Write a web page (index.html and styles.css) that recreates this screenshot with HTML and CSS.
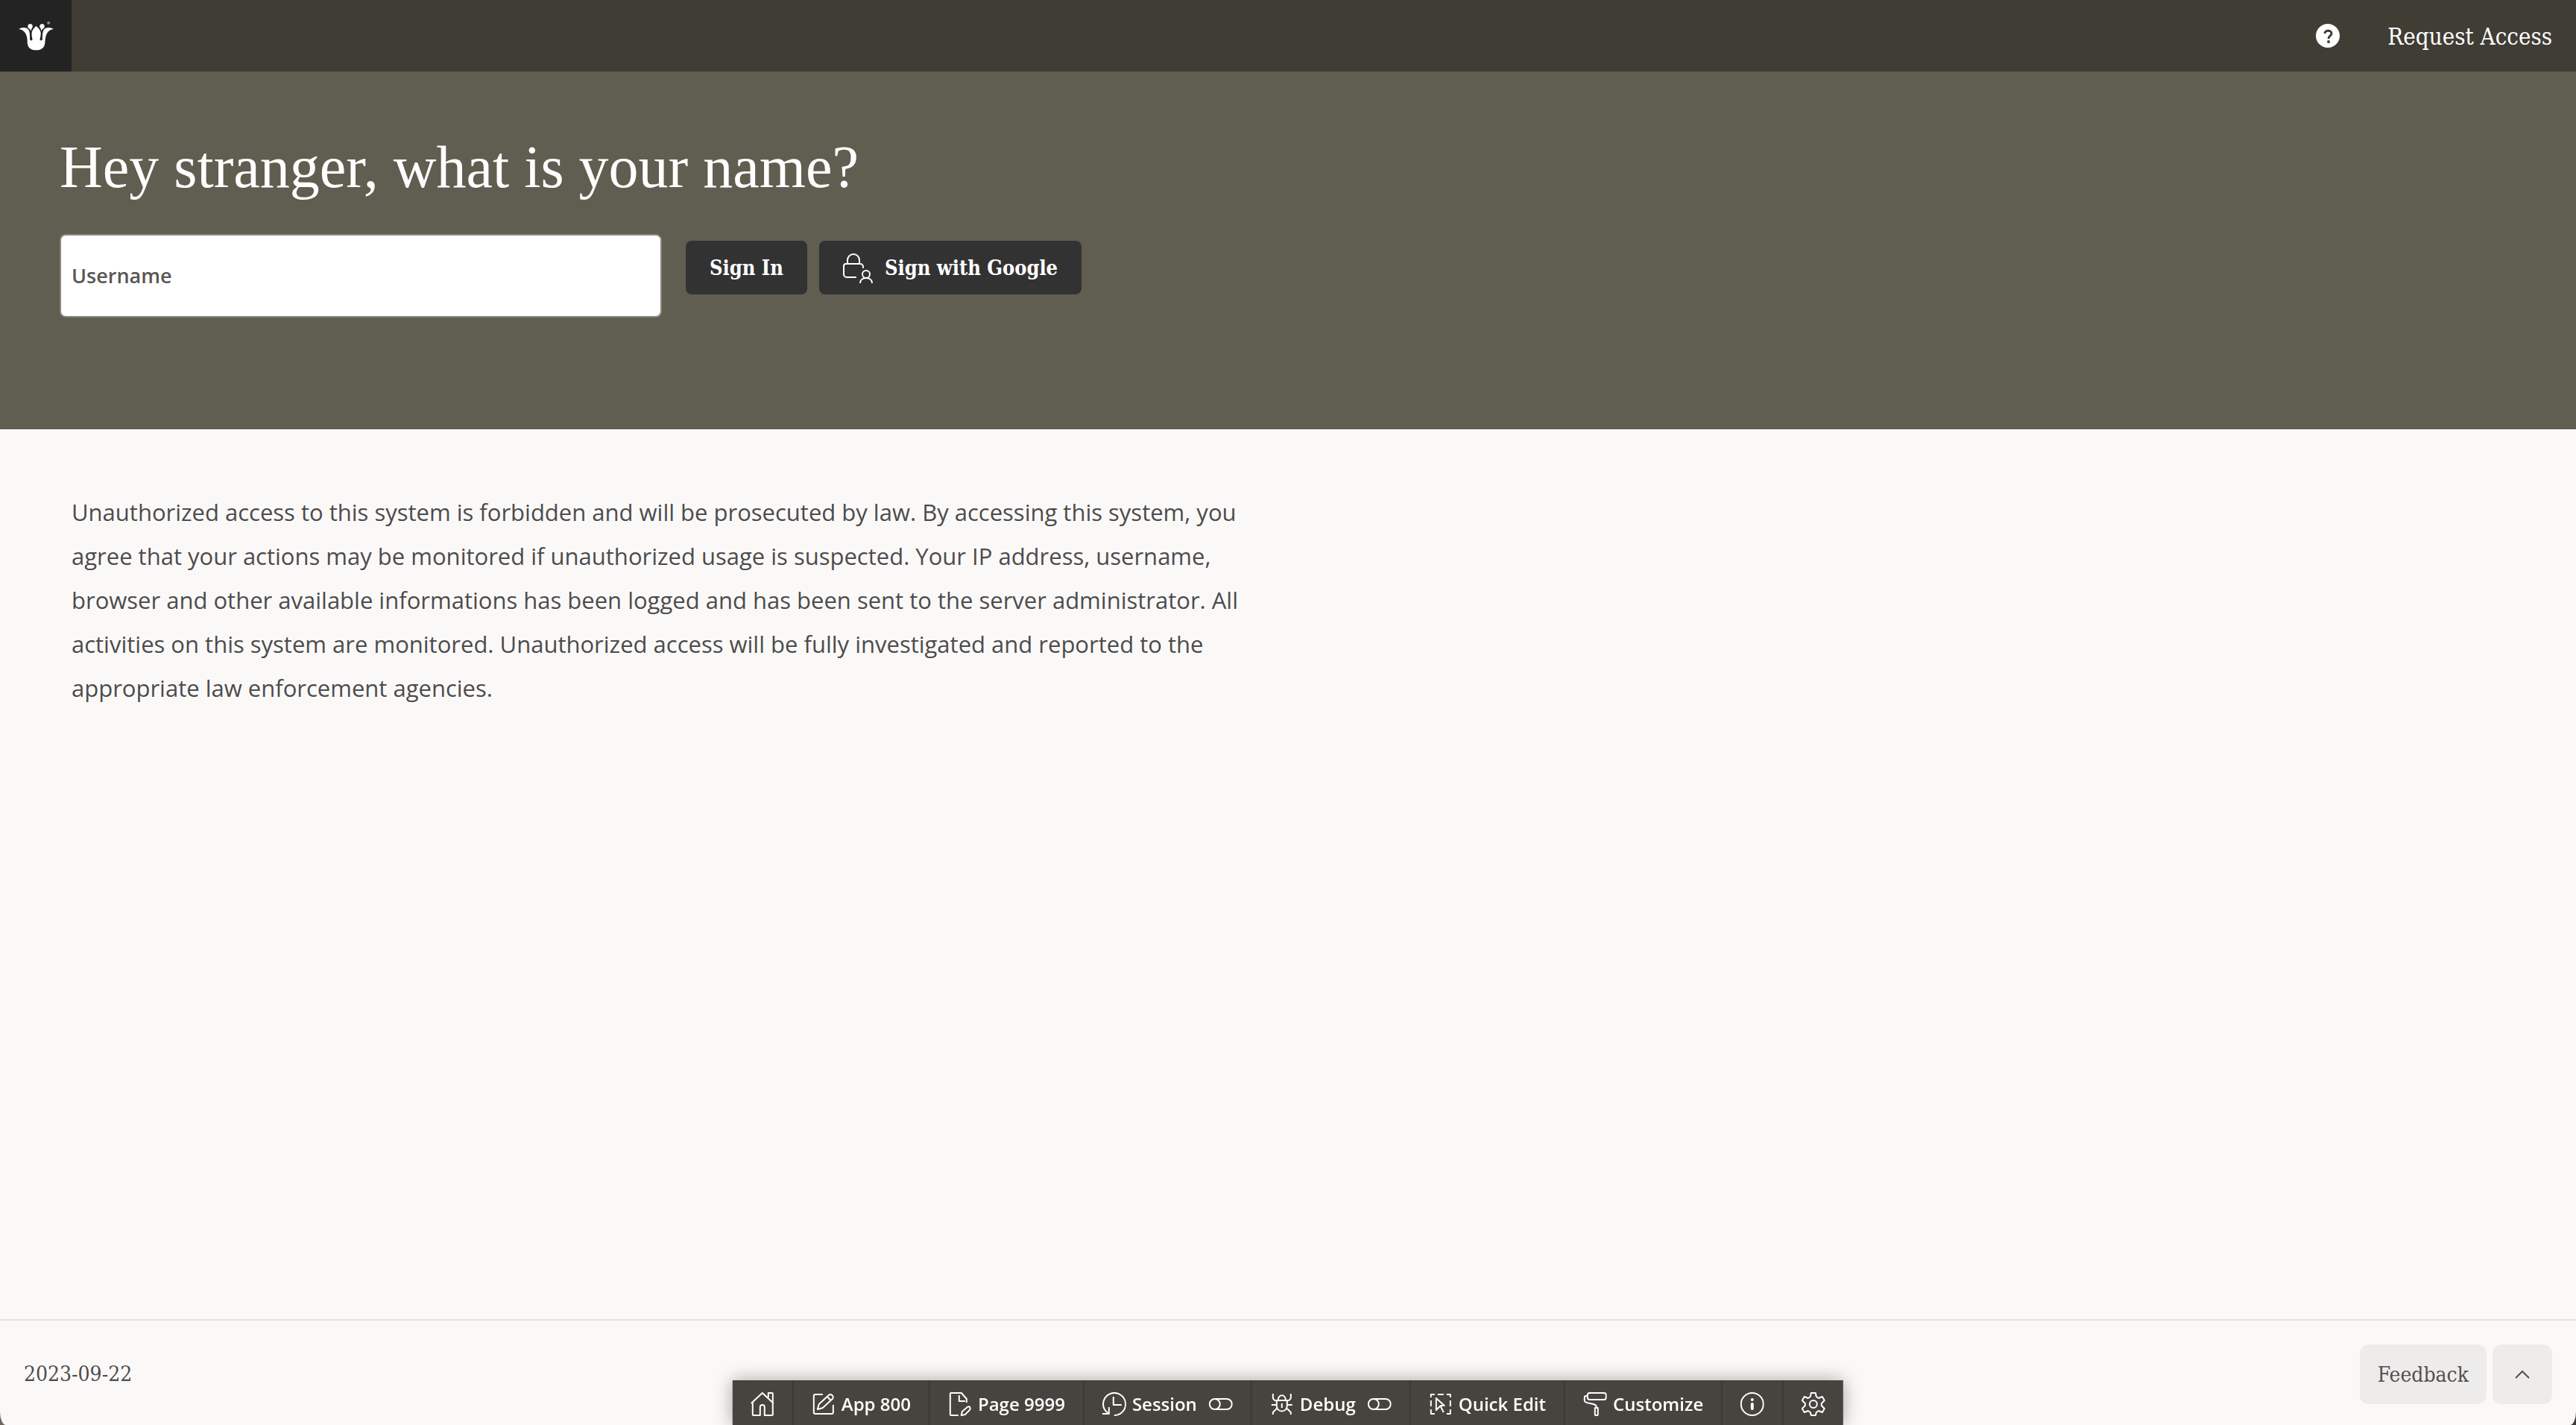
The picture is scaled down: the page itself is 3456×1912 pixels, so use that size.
FILE: index.html
```html
<!DOCTYPE html>
<html lang="en">
<head>
<meta charset="utf-8">
<meta name="viewport" content="width=device-width, initial-scale=1">
<title>Sign In</title>
<link rel="stylesheet" href="styles.css">
</head>
<body>
<div class="page">
  <header class="topbar">
    <a class="logo" href="#" aria-label="Home">
      <svg viewBox="74 80 140 120" aria-hidden="true">
        <path d="M74 113C84 107 97 105 107 110C118 116 119 128 119 156C119 160 129 160 129 156C128 145 124 134 127 124C131 112 138 106 144 101C150 106 158 112 162 124C165 134 160 145 159 156C159 160 168 160 169 156C169 128 171 116 181 110C191 105 204 107 214 113C198 115 186 126 182 146C180 156 180 164 179 172C176 190 162 198 144 198C126 198 112 190 109 172C108 164 109 156 107 146C103 126 90 115 74 113Z"/>
        <path d="M120 92a10 10 0 0 1 8 16c-3 4-4 7-4 14c-2-7-6-9-11-13a10 10 0 0 1 7-17ZM168 92a10 10 0 0 0-8 16c3 4 4 7 4 14c2-7 6-9 11-13a10 10 0 0 0-7-17Z"/>
        <circle class="logo-mark" cx="194" cy="88" r="6"/>
      </svg>
    </a>
    <nav class="topnav">
      <a class="help" href="#" aria-label="Help">
        <svg viewBox="0 0 32 32" aria-hidden="true">
          <circle cx="16" cy="16" r="16"/>
          <path d="M12 13c0-5 9-5 9 0c0 3-4 3-4 7"/>
          <circle class="help-dot" cx="17" cy="24" r="2"/>
        </svg>
      </a>
      <a class="request" href="#">Request Access</a>
    </nav>
  </header>

  <section class="hero">
    <h1 class="title">Hey stranger, what is your name?</h1>
    <form class="login">
      <div class="field">
        <input class="field-input" id="username" type="text">
        <label class="field-label" for="username">Username</label>
      </div>
      <div class="actions">
        <button class="btn" type="submit">Sign In</button>
        <button class="btn" type="button">
          <svg class="icon-lock" viewBox="0 0 40 40" aria-hidden="true">
            <path d="M6 14V9a8 8 0 0 1 16 0v5M27 19v-1a4 4 0 0 0-4-4H4a3 3 0 0 0-3 3v11a4 4 0 0 0 4 4h12"/>
            <circle cx="31" cy="28" r="5"/>
            <path d="M23 40c0-4 3-7 8-7s8 3 8 7"/>
          </svg>
          Sign with Google
        </button>
      </div>
    </form>
  </section>

  <main class="content">
    <p class="notice">Unauthorized access to this system is forbidden and will be prosecuted by law. By accessing this system, you agree that your actions may be monitored if unauthorized usage is suspected. Your IP address, username, browser and other available informations has been logged and has been sent to the server administrator. All activities on this system are monitored. Unauthorized access will be fully investigated and reported to the appropriate law enforcement agencies.</p>
  </main>

  <footer class="footer">
    <span>2023-09-22</span>
    <div class="footer-actions">
      <button class="soft" type="button">Feedback</button>
      <button class="soft soft-square" type="button" aria-label="Back to top">
        <svg viewBox="0 0 32 32" aria-hidden="true"><path d="M7 20l9-9l9 9"/></svg>
      </button>
    </div>
  </footer>
</div>

<div class="devbar">
  <button class="dev" type="button" aria-label="Home">
    <svg viewBox="0 0 32 32" aria-hidden="true"><path d="M1 15L16 1l15 14M3 14v16a1 1 0 0 0 1 1h9V20a3 3 0 0 1 6 0v11h10a1 1 0 0 0 1-1V14M24 7V1h5a1 1 0 0 1 1 1v11"/></svg>
  </button>
  <button class="dev" type="button">
    <svg viewBox="0 0 32 32" aria-hidden="true"><path d="M15 3H5a2 2 0 0 0-2 2v22a2 2 0 0 0 2 2h22a2 2 0 0 0 2-2V17M8 23l2-7L23 4c3-3 8 2 5 5L15 21ZM21 6l5 5"/></svg>
    App 800
  </button>
  <button class="dev" type="button">
    <svg viewBox="0 0 32 32" aria-hidden="true"><path d="M14 31H4a1 1 0 0 1-1-1V2a1 1 0 0 1 1-1h14l7 8v5M15 4v8h8M18 31l1-5l7-6c3-2 5 1 3 4l-6 6Z"/></svg>
    Page 9999
  </button>
  <button class="dev" type="button">
    <svg viewBox="0 0 32 32" aria-hidden="true"><path d="M16 31a15 15 0 1 0-13-8c2 3 4 5 6 6M9 20v9H0M15 6v11h11"/></svg>
    Session
    <svg class="toggle" viewBox="0 0 32 32" aria-hidden="true"><path d="M8 9h16a7 7 0 0 1 0 14H8a7 7 0 0 1 0-14a7 7 0 0 1 0 14"/></svg>
  </button>
  <button class="dev" type="button">
    <svg viewBox="0 0 32 32" aria-hidden="true"><path d="M9 11h14v7c0 10-14 10-14 0ZM11 11c0-9 10-9 10 0M16 15v6M2 17h7M23 17h7M4 2v5a4 4 0 0 0 5 4M28 2v5a4 4 0 0 1-5 4M4 30v-3l6-6M28 30v-3l-6-6"/></svg>
    Debug
    <svg class="toggle" viewBox="0 0 32 32" aria-hidden="true"><path d="M8 9h16a7 7 0 0 1 0 14H8a7 7 0 0 1 0-14a7 7 0 0 1 0 14"/></svg>
  </button>
  <button class="dev" type="button">
    <svg viewBox="0 0 32 32" aria-hidden="true"><path d="M3 7V3h5M12 3h8M24 3h5v4M29 11v8M29 23v6h-5M8 29H3v-6M3 11v8M10 8v16l4-4l2-2h5ZM16 19l4 8"/></svg>
    Quick Edit
  </button>
  <button class="dev" type="button">
    <svg viewBox="0 0 32 32" aria-hidden="true"><rect x="6" y="1" width="25" height="9" rx="3"/><path d="M6 5H4a2 2 0 0 0-2 2v4c0 6 16 2 16 9M16 21h4v9a1 1 0 0 1-1 1h-2a1 1 0 0 1-1-1Z"/></svg>
    Customize
  </button>
  <button class="dev" type="button" aria-label="Information">
    <svg viewBox="0 0 32 32" aria-hidden="true"><circle cx="16" cy="16" r="15"/><path class="thick" d="M16 16v6M16 10v0"/></svg>
  </button>
  <button class="dev" type="button" aria-label="Settings">
    <svg viewBox="0 0 32 32" aria-hidden="true"><circle cx="16" cy="16" r="5"/><path d="M13 1h6l1 5l3 2l5-2l3 5l-4 4v3l4 4l-3 5l-5-2l-3 2l-1 4h-6l-1-4l-3-2l-5 2l-3-5l4-4v-3l-4-4l3-5l5 2l3-2Z"/></svg>
  </button>
</div>
</body>
</html>
```

FILE: styles.css
```css
:root {
  --slab: "DejaVu Serif Condensed", "DejaVu Serif", serif;
  --sans: "Open Sans", "Noto Sans", sans-serif;
}

* {
  box-sizing: border-box;
}

html {
  background: linear-gradient(90deg, #6f6655, #3f3a36);
}

body {
  margin: 0;
  font-family: var(--sans);
  color: #4c4c4c;
}

button {
  border: 0;
  cursor: pointer;
}

a {
  color: inherit;
  text-decoration: none;
}

svg {
  flex: none;
  display: block;
}

.page {
  display: flex;
  flex-direction: column;
  min-height: 100vh;
  background: #fbf9f8;
  border-radius: 0 0 8px 8px / 0 0 18px 18px;
  overflow: hidden;
}

/* Top bar */
.topbar {
  display: flex;
  justify-content: space-between;
  height: 96px;
  background: #403d35;
  color: #fff;
}

.logo {
  display: flex;
  align-items: center;
  justify-content: center;
  width: 96px;
  background: #222322;
}

.logo svg {
  width: 47px;
  height: 40px;
  fill: #fff;
}

.logo .logo-mark {
  fill: #888;
}

.topnav {
  display: flex;
  align-items: center;
  gap: 64px;
  padding-right: 32px;
}

.help svg {
  width: 32px;
  height: 32px;
  fill: #fff;
}

.help path {
  fill: none;
  stroke: #403d35;
  stroke-width: 3;
}

.help .help-dot {
  fill: #403d35;
}

.request {
  padding-top: 2px;
  font: 31px/48px var(--slab);
}

/* Sign-in banner */
.hero {
  height: 480px;
  padding: 68px 80px;
  background: #605e51;
  color: #fff;
}

.title {
  margin: 0 0 30px;
  font: 80px/120px "Liberation Serif", serif;
}

.login {
  display: flex;
  align-items: flex-start;
  gap: 32px;
}

.field {
  position: relative;
  width: 808px;
}

.field-input {
  display: block;
  width: 100%;
  height: 112px;
  padding: 40px 16px 8px;
  border: 2px solid #8b8580;
  border-radius: 8px;
  background: #fff;
  font: 27px/40px var(--sans);
}

.field-label {
  position: absolute;
  left: 16px;
  top: 36px;
  font: 600 27px/40px var(--sans);
  color: #5b5652;
}

.actions {
  display: flex;
  gap: 16px;
  padding-top: 9px;
}

.btn {
  display: flex;
  align-items: center;
  gap: 16px;
  height: 72px;
  padding: 2px 32px 0;
  border-radius: 8px;
  background: #333232;
  color: #fff;
  font: bold 27px/40px var(--slab);
}

.icon-lock {
  width: 40px;
  height: 40px;
  fill: none;
  stroke: #fff;
  stroke-width: 2;
  stroke-linecap: round;
}

/* Notice */
.content {
  flex: 1;
  padding: 82px 96px;
}

.notice {
  max-width: 1600px;
  margin: 0;
  font-size: 31px;
  line-height: 59px;
}

/* Footer */
.footer {
  display: flex;
  align-items: center;
  justify-content: space-between;
  padding: 32px 32px 28px;
  border-top: 2px solid #e4e2df;
  font: 28px/40px var(--slab);
}

.footer-actions {
  display: flex;
  gap: 8px;
}

.soft {
  display: flex;
  align-items: center;
  justify-content: center;
  height: 80px;
  padding: 2px 24px 0;
  border-radius: 12px;
  background: #eeecea;
  color: #505050;
  font: 28px/40px var(--slab);
}

.soft-square {
  width: 80px;
}

.soft svg {
  width: 32px;
  height: 32px;
  fill: none;
  stroke: #505050;
  stroke-width: 2;
}

/* Developer toolbar */
.devbar {
  position: fixed;
  bottom: 0;
  left: 50%;
  transform: translateX(-50%);
  display: flex;
  background: #47433e;
  box-shadow: 0 0 24px rgba(0, 0, 0, 0.35);
}

.dev {
  display: flex;
  align-items: center;
  gap: 8px;
  height: 60px;
  padding: 4px 24px 0;
  border-right: 2px solid #3d3935;
  background: none;
  color: #fff;
  font: 600 24px/32px var(--sans);
  white-space: nowrap;
}

.dev:last-child {
  border-right: 0;
}

.dev svg {
  width: 32px;
  height: 32px;
  fill: none;
  stroke: #fff;
  stroke-width: 2;
  stroke-linejoin: round;
}

.dev .toggle {
  margin-left: 8px;
}

.dev .thick {
  stroke-width: 4;
  stroke-linecap: round;
}
```
